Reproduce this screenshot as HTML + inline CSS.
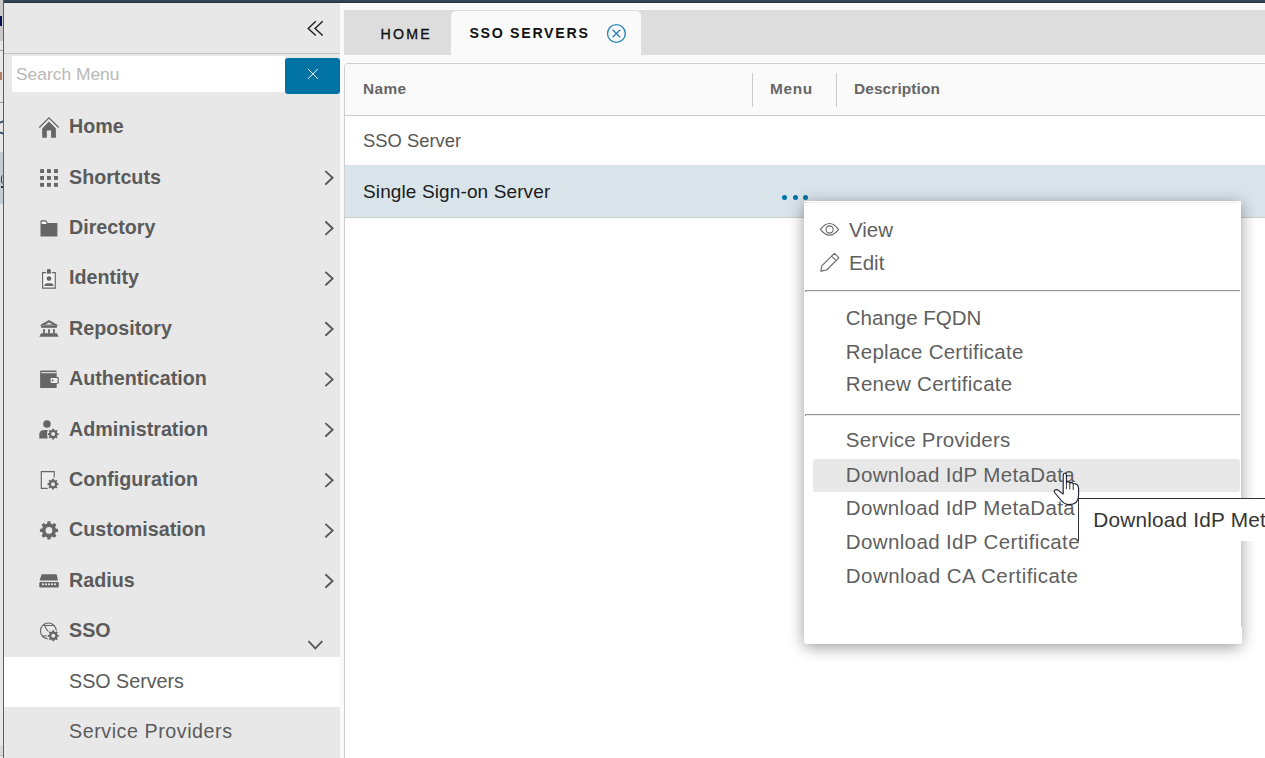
<!DOCTYPE html>
<html><head><meta charset="utf-8"><style>
html,body{margin:0;padding:0;}
body{width:1265px;height:758px;overflow:hidden;position:relative;background:#fafafa;font-family:"Liberation Sans",sans-serif;}
.a{position:absolute;}
.t{position:absolute;white-space:nowrap;}
svg{position:absolute;overflow:visible;}
</style></head><body>
<div class="a" style="left:4px;top:0;width:1261px;height:2px;background:#314554"></div><div class="a" style="left:4px;top:2px;width:1261px;height:1px;background:#223545"></div><div class="a" style="left:4px;top:3px;width:1261px;height:1px;background:#ffffff"></div><div class="a" style="left:0;top:0;width:3px;height:758px;background:#e8e8e8"></div><div class="a" style="left:0;top:0;width:3px;height:41px;background:#c9c9c9"></div><div class="a" style="left:0;top:16px;width:2px;height:10px;background:#0a1050"></div><div class="a" style="left:0;top:50px;width:3px;height:1px;background:#9a9a9a"></div><div class="a" style="left:0;top:72px;width:2px;height:8px;background:#b08060"></div><div class="a" style="left:0;top:102px;width:3px;height:1px;background:#9a9a9a"></div><div class="a" style="left:0;top:152px;width:3px;height:52px;background:#c4ccd2"></div><div class="a" style="left:0;top:745px;width:3px;height:10px;background:#d9d9d9"></div><div class="a" style="left:0;top:755px;width:3px;height:1px;background:#bbb"></div><div class="a" style="left:0;top:121px;width:3px;height:1.5px;background:#3a4a6a;transform:skewY(-20deg)"></div><div class="a" style="left:0;top:132px;width:3px;height:1.5px;background:#3a4a6a;transform:skewY(20deg)"></div><div class="a" style="left:1px;top:175px;width:2px;height:9px;border-left:1.5px solid #3a3040;border-radius:3px 0 0 3px"></div><div class="a" style="left:1px;top:186px;width:2px;height:1.5px;background:#3a3040"></div><div class="a" style="left:3px;top:0;width:1px;height:758px;background:#5e5e5e"></div><div class="a" style="left:4px;top:3px;width:336px;height:755px;background:#e8e8e8"></div><div class="a" style="left:4px;top:53px;width:336px;height:1px;background:#c4c4c4"></div><svg style="left:0;top:0" width="1" height="1"><path d="M315.8 21.3 L308.2 28.4 L315.8 35.5 M322.7 21.3 L315.1 28.4 L322.7 35.5" fill="none" stroke="#1e1e1e" stroke-width="1.4"/></svg><div class="a" style="left:12px;top:56px;width:273px;height:36px;background:#fff"></div><div class="t" style="left:16px;top:66.07px;font-size:17.4px;line-height:17.4px;color:#b9b9b9;font-weight:400;letter-spacing:0px;">Search Menu</div>
<div class="a" style="left:285px;top:58px;width:55px;height:36px;background:#0072a3;border-radius:3px"></div><svg style="left:0;top:0" width="1" height="1"><path d="M307.9 68.9 L317.9 78.9 M317.9 68.9 L307.9 78.9" stroke="#fff" stroke-width="1"/></svg><div class="t" style="left:69px;top:117.12px;font-size:19.7px;line-height:19.7px;color:#5b5b5b;font-weight:700;letter-spacing:0px;">Home</div>
<div class="t" style="left:69px;top:167.52px;font-size:19.7px;line-height:19.7px;color:#5b5b5b;font-weight:700;letter-spacing:0px;">Shortcuts</div>
<svg style="left:0;top:0" width="1" height="1"><path d="M325.9 171.6 L332.6 177.8 L325.9 184.0" fill="none" stroke="#595959" stroke-width="1.9" stroke-linecap="round"/></svg><div class="t" style="left:69px;top:217.92px;font-size:19.7px;line-height:19.7px;color:#5b5b5b;font-weight:700;letter-spacing:0px;">Directory</div>
<svg style="left:0;top:0" width="1" height="1"><path d="M325.9 222.0 L332.6 228.2 L325.9 234.4" fill="none" stroke="#595959" stroke-width="1.9" stroke-linecap="round"/></svg><div class="t" style="left:69px;top:268.32px;font-size:19.7px;line-height:19.7px;color:#5b5b5b;font-weight:700;letter-spacing:0px;">Identity</div>
<svg style="left:0;top:0" width="1" height="1"><path d="M325.9 272.4 L332.6 278.6 L325.9 284.8" fill="none" stroke="#595959" stroke-width="1.9" stroke-linecap="round"/></svg><div class="t" style="left:69px;top:318.72px;font-size:19.7px;line-height:19.7px;color:#5b5b5b;font-weight:700;letter-spacing:0px;">Repository</div>
<svg style="left:0;top:0" width="1" height="1"><path d="M325.9 322.8 L332.6 329.0 L325.9 335.2" fill="none" stroke="#595959" stroke-width="1.9" stroke-linecap="round"/></svg><div class="t" style="left:69px;top:369.12px;font-size:19.7px;line-height:19.7px;color:#5b5b5b;font-weight:700;letter-spacing:0px;">Authentication</div>
<svg style="left:0;top:0" width="1" height="1"><path d="M325.9 373.2 L332.6 379.4 L325.9 385.6" fill="none" stroke="#595959" stroke-width="1.9" stroke-linecap="round"/></svg><div class="t" style="left:69px;top:419.52px;font-size:19.7px;line-height:19.7px;color:#5b5b5b;font-weight:700;letter-spacing:0px;">Administration</div>
<svg style="left:0;top:0" width="1" height="1"><path d="M325.9 423.6 L332.6 429.8 L325.9 436.0" fill="none" stroke="#595959" stroke-width="1.9" stroke-linecap="round"/></svg><div class="t" style="left:69px;top:469.92px;font-size:19.7px;line-height:19.7px;color:#5b5b5b;font-weight:700;letter-spacing:0px;">Configuration</div>
<svg style="left:0;top:0" width="1" height="1"><path d="M325.9 474.0 L332.6 480.2 L325.9 486.4" fill="none" stroke="#595959" stroke-width="1.9" stroke-linecap="round"/></svg><div class="t" style="left:69px;top:520.32px;font-size:19.7px;line-height:19.7px;color:#5b5b5b;font-weight:700;letter-spacing:0px;">Customisation</div>
<svg style="left:0;top:0" width="1" height="1"><path d="M325.9 524.4 L332.6 530.6 L325.9 536.8" fill="none" stroke="#595959" stroke-width="1.9" stroke-linecap="round"/></svg><div class="t" style="left:69px;top:570.72px;font-size:19.7px;line-height:19.7px;color:#5b5b5b;font-weight:700;letter-spacing:0px;">Radius</div>
<svg style="left:0;top:0" width="1" height="1"><path d="M325.9 574.8 L332.6 581.0 L325.9 587.2" fill="none" stroke="#595959" stroke-width="1.9" stroke-linecap="round"/></svg><div class="t" style="left:69px;top:621.12px;font-size:19.7px;line-height:19.7px;color:#5b5b5b;font-weight:700;letter-spacing:0px;">SSO</div>
<svg style="left:0;top:0" width="1" height="1"><path d="M308.9 641.6 L315.3 648.4 L321.8 641.6" fill="none" stroke="#595959" stroke-width="1.9" stroke-linecap="round"/></svg><div class="a" style="left:4px;top:657px;width:336px;height:50px;background:#fff"></div><div class="t" style="left:69px;top:671.92px;font-size:19.7px;line-height:19.7px;color:#5b5b5b;font-weight:400;letter-spacing:0px;">SSO Servers</div>
<div class="t" style="left:69px;top:721.92px;font-size:19.7px;line-height:19.7px;color:#5b5b5b;font-weight:400;letter-spacing:0.55px;">Service Providers</div>
<svg style="left:0;top:0" width="1" height="1"><path d="M39.3 127.5 L49 117.9 L58.7 127.5" fill="none" stroke="#666" stroke-width="1.25"/><path d="M42.2 137.7 V128.4 L49 121.6 L55.9 128.4 V137.7 H51.1 V130.5 H46.8 V137.7 Z" fill="#666"/><rect x="40.1" y="169.1" width="3.9" height="3.9" fill="#666"/><rect x="47" y="169.1" width="3.9" height="3.9" fill="#666"/><rect x="54" y="169.1" width="3.9" height="3.9" fill="#666"/><rect x="40.1" y="176" width="3.9" height="3.9" fill="#666"/><rect x="47" y="176" width="3.9" height="3.9" fill="#666"/><rect x="54" y="176" width="3.9" height="3.9" fill="#666"/><rect x="40.1" y="182.9" width="3.9" height="3.9" fill="#666"/><rect x="47" y="182.9" width="3.9" height="3.9" fill="#666"/><rect x="54" y="182.9" width="3.9" height="3.9" fill="#666"/><path d="M40.5 236.5 V221.2 Q40.5 220.2 41.5 220.2 H46 L47.8 223.1 H57.4 V236.5 Z" fill="#666"/><path d="M41.7 221.4 H45.5 L46.9 223.9 H41.7 Z" fill="#f4f4f4"/><path d="M46.2 272.6 H42.6 V288.1 H55.3 V272.6 H51.8" fill="#f2f2f2" stroke="#666" stroke-width="1.15"/><path d="M47 273.7 V270 Q47 268.9 48 268.9 H49.8 Q50.8 268.9 50.8 270 V273.7 Z" fill="#666"/><circle cx="49" cy="278.6" r="2.4" fill="#666"/><path d="M44.1 285.9 Q45 283.2 46.5 283.2 H51.5 Q53 283.2 53.8 285.9 Z" fill="#666"/><path d="M39.3 325.6 L49 320.1 L58.6 325.6 Z" fill="#666"/><path d="M45.2 324.6 L49 322.4 L52.8 324.6 Z" fill="#f0f0f0"/><rect x="41.1" y="325.5" width="15.8" height="2.3" fill="#666"/><rect x="43.1" y="329.1" width="1.8" height="4.3" fill="#666"/><rect x="48.1" y="329.1" width="1.8" height="4.3" fill="#666"/><rect x="53.0" y="329.1" width="1.8" height="4.3" fill="#666"/><path d="M41.1 333.2 H56.9 L58.6 336.8 H39.3 Z" fill="#666"/><rect x="40.1" y="370.5" width="16.6" height="17.6" rx="1.2" fill="#666"/><rect x="41" y="372.2" width="15.7" height="1" fill="#f0f0f0"/><rect x="49.7" y="377.1" width="9.1" height="6.7" rx="1.3" fill="#666"/><rect x="50.6" y="378" width="7" height="4.9" rx="1" fill="#f0f0f0"/><circle cx="52.6" cy="380.5" r="0.95" fill="#666"/><circle cx="47" cy="424" r="3.8" fill="#666"/><path d="M39.3 438.5 V434.5 Q39.3 430.1 45 430.1 H47.6 V438.5 Z" fill="#666"/><circle cx="53.15" cy="434.1" r="6.2" fill="#e8e8e8"/><path d="M51.99 430.06 L52.33 428.66 L53.97 428.66 L54.31 430.06 L55.18 430.43 L56.41 429.67 L57.58 430.84 L56.82 432.07 L57.19 432.94 L58.59 433.28 L58.59 434.92 L57.19 435.26 L56.82 436.13 L57.58 437.36 L56.41 438.53 L55.18 437.77 L54.31 438.14 L53.97 439.54 L52.33 439.54 L51.99 438.14 L51.12 437.77 L49.89 438.53 L48.72 437.36 L49.48 436.13 L49.11 435.26 L47.71 434.92 L47.71 433.28 L49.11 432.94 L49.48 432.07 L48.72 430.84 L49.89 429.67 L51.12 430.43 Z M55.15 434.10 A2.0 2.0 0 1 0 51.15 434.10 A2.0 2.0 0 1 0 55.15 434.10 Z" fill="#666" fill-rule="evenodd"/><path d="M54.2 477.5 V471.6 H41.3 V488.3 H47.7" fill="#efefef" stroke="#666" stroke-width="1.15"/><circle cx="53" cy="484.15" r="6.3" fill="#e8e8e8"/><path d="M51.84 480.11 L52.18 478.71 L53.82 478.71 L54.16 480.11 L55.03 480.48 L56.26 479.72 L57.43 480.89 L56.67 482.12 L57.04 482.99 L58.44 483.33 L58.44 484.97 L57.04 485.31 L56.67 486.18 L57.43 487.41 L56.26 488.58 L55.03 487.82 L54.16 488.19 L53.82 489.59 L52.18 489.59 L51.84 488.19 L50.97 487.82 L49.74 488.58 L48.57 487.41 L49.33 486.18 L48.96 485.31 L47.56 484.97 L47.56 483.33 L48.96 482.99 L49.33 482.12 L48.57 480.89 L49.74 479.72 L50.97 480.48 Z M55.00 484.15 A2.0 2.0 0 1 0 51.00 484.15 A2.0 2.0 0 1 0 55.00 484.15 Z" fill="#666" fill-rule="evenodd"/><path d="M47.10 523.65 L47.50 521.32 L50.44 521.32 L50.84 523.65 L52.42 524.31 L54.36 522.94 L56.43 525.01 L55.06 526.95 L55.72 528.53 L58.05 528.93 L58.05 531.87 L55.72 532.27 L55.06 533.85 L56.43 535.79 L54.36 537.86 L52.42 536.49 L50.84 537.15 L50.44 539.48 L47.50 539.48 L47.10 537.15 L45.52 536.49 L43.58 537.86 L41.51 535.79 L42.88 533.85 L42.22 532.27 L39.89 531.87 L39.89 528.93 L42.22 528.53 L42.88 526.95 L41.51 525.01 L43.58 522.94 L45.52 524.31 Z M52.37 530.40 A3.4 3.4 0 1 0 45.57 530.40 A3.4 3.4 0 1 0 52.37 530.40 Z" fill="#666" fill-rule="evenodd"/><path d="M41.3 575.2 Q41.3 574.2 42.3 574.2 H55.9 Q56.9 574.2 56.9 575.2 L58 580.4 H39.6 Z" fill="#666"/><rect x="39.3" y="582.1" width="19.5" height="5.45" rx="1" fill="#666"/><rect x="42.0" y="583.4" width="1.8" height="1.75" fill="#f0f0f0"/><rect x="45.050000000000004" y="583.4" width="1.8" height="1.75" fill="#f0f0f0"/><rect x="48.1" y="583.4" width="1.8" height="1.75" fill="#f0f0f0"/><rect x="51.1" y="583.4" width="1.8" height="1.75" fill="#f0f0f0"/><rect x="54.15" y="583.4" width="1.8" height="1.75" fill="#f0f0f0"/><circle cx="48.35" cy="630.9" r="7.9" fill="none" stroke="#666" stroke-width="1.15"/><path d="M44.6 624.2 Q45 628.5 49.5 632.5 M43.3 625.5 H54.5 M42 637 Q45 634.5 48.5 637" fill="none" stroke="#666" stroke-width="1.1"/><circle cx="53.3" cy="635.8" r="6.4" fill="#e8e8e8"/><path d="M52.14 631.76 L52.48 630.36 L54.12 630.36 L54.46 631.76 L55.33 632.13 L56.56 631.37 L57.73 632.54 L56.97 633.77 L57.34 634.64 L58.74 634.98 L58.74 636.62 L57.34 636.96 L56.97 637.83 L57.73 639.06 L56.56 640.23 L55.33 639.47 L54.46 639.84 L54.12 641.24 L52.48 641.24 L52.14 639.84 L51.27 639.47 L50.04 640.23 L48.87 639.06 L49.63 637.83 L49.26 636.96 L47.86 636.62 L47.86 634.98 L49.26 634.64 L49.63 633.77 L48.87 632.54 L50.04 631.37 L51.27 632.13 Z M55.30 635.80 A2.0 2.0 0 1 0 51.30 635.80 A2.0 2.0 0 1 0 55.30 635.80 Z" fill="#666" fill-rule="evenodd"/></svg><div class="a" style="left:344px;top:10px;width:921px;height:45px;background:#dddddd"></div><div class="t" style="left:380.6px;top:26.58px;font-size:14.2px;line-height:14.2px;color:#111;font-weight:400;letter-spacing:2.2px;-webkit-text-stroke:0.35px #111;">HOME</div>
<div class="a" style="left:451px;top:11px;width:190px;height:44px;background:#fafafa;border-radius:5px 5px 0 0"></div><div class="t" style="left:469.4px;top:26.38px;font-size:14.2px;line-height:14.2px;color:#111;font-weight:700;letter-spacing:1.7px;">SSO SERVERS</div>
<svg style="left:0;top:0" width="1" height="1"><circle cx="616.4" cy="33.5" r="8.9" fill="none" stroke="#2c89b5" stroke-width="1.4"/><path d="M612.6 29.7 L620.2 37.3 M620.2 29.7 L612.6 37.3" stroke="#2c89b5" stroke-width="1.4"/></svg><div class="a" style="left:344px;top:63px;width:960px;height:720px;background:#fff;border:1px solid #cfcfcf;border-radius:4px;box-sizing:border-box"></div><div class="a" style="left:345px;top:64px;width:920px;height:51px;background:#fafafa;border-radius:3px 0 0 0"></div><div class="a" style="left:345px;top:115px;width:920px;height:1px;background:#cccccc"></div><div class="a" style="left:345px;top:165px;width:920px;height:1px;background:#dddddd"></div><div class="a" style="left:345px;top:166px;width:920px;height:51px;background:#d9e3ea"></div><div class="a" style="left:345px;top:217px;width:920px;height:1px;background:#cccccc"></div><div class="a" style="left:752px;top:73px;width:1px;height:34px;background:#cccccc"></div><div class="a" style="left:836px;top:73px;width:1px;height:34px;background:#cccccc"></div><div class="t" style="left:363px;top:81.26px;font-size:15.4px;line-height:15.4px;color:#666;font-weight:700;letter-spacing:0.4px;">Name</div>
<div class="t" style="left:770px;top:81.26px;font-size:15.4px;line-height:15.4px;color:#666;font-weight:700;letter-spacing:0.65px;">Menu</div>
<div class="t" style="left:854px;top:81.26px;font-size:15.4px;line-height:15.4px;color:#666;font-weight:700;letter-spacing:0.12px;">Description</div>
<div class="t" style="left:363px;top:132.22px;font-size:18.4px;line-height:18.4px;color:#565656;font-weight:400;letter-spacing:0px;">SSO Server</div>
<div class="t" style="left:363px;top:182.22px;font-size:19px;line-height:19px;color:#1b1b1b;font-weight:400;letter-spacing:0.12px;">Single Sign-on Server</div>
<div class="a" style="left:781.7px;top:195.1px;width:5px;height:5px;border-radius:50%;background:#0072a3"></div><div class="a" style="left:792.5px;top:195.1px;width:5px;height:5px;border-radius:50%;background:#0072a3"></div><div class="a" style="left:803.4px;top:195.1px;width:5px;height:5px;border-radius:50%;background:#0072a3"></div><div class="a" style="left:804px;top:201px;width:437px;height:443px;background:#fff;border-radius:1px 1px 3px 3px;box-shadow:0 3px 16px rgba(0,0,0,0.4)"></div><div class="a" style="left:1240px;top:627px;width:2px;height:17px;background:#fff;border-radius:0 0 2px 0"></div><div class="a" style="left:806px;top:202px;width:433px;height:1px;background:#efefef"></div><div class="a" style="left:805px;top:202px;width:1px;height:1px;background:#aaa"></div><svg style="left:0;top:0" width="1" height="1"><path d="M820.4 229.4 Q829.5 217.6 838.6 229.4 Q829.5 241.2 820.4 229.4 Z" fill="none" stroke="#666" stroke-width="1.1"/><circle cx="829.6" cy="229.5" r="3.6" fill="none" stroke="#666" stroke-width="1.1"/><path d="M834.4 253.3 L838.9 257.8 L826.6 270 L820.8 271.1 L821.8 265.9 Z M831.6 256.1 L836.1 260.6" fill="none" stroke="#666" stroke-width="1.1" stroke-linejoin="round"/></svg><div class="t" style="left:849px;top:220.15px;font-size:20.5px;line-height:20.5px;color:#5f5f5f;font-weight:400;letter-spacing:0px;">View</div>
<div class="t" style="left:849px;top:252.85px;font-size:20.5px;line-height:20.5px;color:#5f5f5f;font-weight:400;letter-spacing:0px;">Edit</div>
<div class="a" style="left:805px;top:290px;width:435px;height:1px;background:#959595"></div><div class="a" style="left:805px;top:291px;width:1px;height:1px;background:#959595"></div><div class="a" style="left:806px;top:291px;width:434px;height:1px;background:#eeeeee"></div><div class="t" style="left:845.8px;top:307.95px;font-size:20.5px;line-height:20.5px;color:#5f5f5f;font-weight:400;letter-spacing:0px;">Change FQDN</div>
<div class="t" style="left:845.8px;top:341.75px;font-size:20.5px;line-height:20.5px;color:#5f5f5f;font-weight:400;letter-spacing:0.24px;">Replace Certificate</div>
<div class="t" style="left:845.8px;top:374.45px;font-size:20.5px;line-height:20.5px;color:#5f5f5f;font-weight:400;letter-spacing:0.29px;">Renew Certificate</div>
<div class="a" style="left:805px;top:414px;width:435px;height:1px;background:#959595"></div><div class="a" style="left:805px;top:415px;width:1px;height:1px;background:#959595"></div><div class="a" style="left:806px;top:415px;width:434px;height:1px;background:#eeeeee"></div><div class="t" style="left:845.8px;top:430.35px;font-size:20.5px;line-height:20.5px;color:#5f5f5f;font-weight:400;letter-spacing:0.24px;">Service Providers</div>
<div class="a" style="left:813px;top:459.2px;width:427px;height:32.8px;background:#e8e8e8;border-radius:3px"></div><div class="t" style="left:845.8px;top:465.25px;font-size:20.5px;line-height:20.5px;color:#5f5f5f;font-weight:400;letter-spacing:0.35px;">Download IdP MetaData</div>
<div class="t" style="left:845.8px;top:498.25px;font-size:20.5px;line-height:20.5px;color:#5f5f5f;font-weight:400;letter-spacing:0.35px;">Download IdP MetaData</div>
<div class="t" style="left:845.8px;top:532.15px;font-size:20.5px;line-height:20.5px;color:#5f5f5f;font-weight:400;letter-spacing:0.37px;">Download IdP Certificate</div>
<div class="t" style="left:845.8px;top:565.95px;font-size:20.5px;line-height:20.5px;color:#5f5f5f;font-weight:400;letter-spacing:0.45px;">Download CA Certificate</div>
<div class="a" style="left:1078px;top:498px;width:200px;height:43px;background:#fff;border-left:1px solid #333;border-top:1px solid #333;box-sizing:border-box"></div><div class="t" style="left:1093.3px;top:510.19px;font-size:20.8px;line-height:20.8px;color:#353535;font-weight:400;letter-spacing:0.2px;">Download IdP Met</div>
<svg style="left:0;top:0" width="1" height="1"><path d="M1063.2 475 Q1063.2 473.3 1064.8 473.3 Q1066.4 473.3 1066.4 475 V482.6 Q1066.6 481.6 1068.2 481.6 Q1069.6 481.6 1069.8 483.2 Q1070.2 482.4 1071.6 482.4 Q1073 482.6 1073.2 484 Q1073.6 483.6 1075 483.8 Q1078.6 484.4 1078.6 489 V495 Q1078.6 504.6 1069 504.6 Q1064 504.6 1060 499 L1054.6 492.5 Q1053.6 491 1055 490 Q1056.8 489 1058.6 490.6 L1063.2 494 Z" fill="#fff" stroke="#1a1a2e" stroke-width="1.1" stroke-linejoin="round"/><path d="M1066.4 482.6 V489 M1069.8 483.2 V489.5 M1073.2 484 V490" stroke="#1a1a2e" stroke-width="0.9"/></svg></body></html>
